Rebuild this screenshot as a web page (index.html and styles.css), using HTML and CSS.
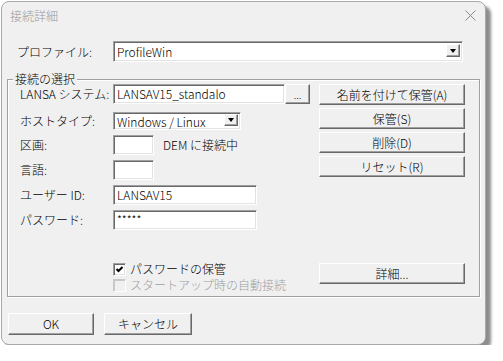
FILE: index.html
```html
<!DOCTYPE html>
<html lang="ja">
<head>
	<meta charset="UTF-8">
	<title>接続詳細</title>
	<link rel="stylesheet" href="styles.css">
</head>
<body>
<div class="window">
	<div class="titlebar">
		<span class="title">接続詳細</span>
		<svg class="close" width="11" height="11" viewBox="0 0 11 11"><path d="M0.5 0.5 L10.5 10.5 M10.5 0.5 L0.5 10.5" stroke="#8a8a8a" stroke-width="1" fill="none"/></svg>
	</div>
	<div class="body">
		<div class="profile">
			<label class="lbl">プロファイル:</label>
			<div class="combo sunken w-profile"><span>ProfileWin</span><span class="arrow"><i></i></span></div>
		</div>
		<fieldset class="group">
			<legend>接続の選択</legend>
			<div class="group-main">
				<div class="form">
					<div class="row first">
						<label class="lbl">LANSA システム:</label>
						<div class="sunken text w-sys">LANSAV15_standalo</div>
						<button class="btn browse">...</button>
					</div>
					<div class="row host">
						<label class="lbl">ホストタイプ:</label>
						<div class="combo sunken w-host"><span>Windows / Linux</span><span class="arrow"><i></i></span></div>
					</div>
					<div class="row">
						<label class="lbl">区画:</label>
						<div class="sunken text w-small"></div>
						<span class="note">DEM に接続中</span>
					</div>
					<div class="row">
						<label class="lbl">言語:</label>
						<div class="sunken text w-small"></div>
					</div>
					<div class="row">
						<label class="lbl">ユーザー ID:</label>
						<div class="sunken text w-user">LANSAV15</div>
					</div>
					<div class="row">
						<label class="lbl">パスワード:</label>
						<div class="sunken text w-user pw">*****</div>
					</div>
				</div>
				<div class="actions">
					<button class="btn">名前を付けて保管(A)</button>
					<button class="btn">保管(S)</button>
					<button class="btn">削除(D)</button>
					<button class="btn">リセット(R)</button>
				</div>
			</div>
			<div class="group-bottom">
				<div class="checks">
					<div class="check">
						<span class="box sunken"><svg width="9" height="9" viewBox="0 0 9 9"><path d="M1.5 4 L3.5 6 L7.5 2" stroke="#000" stroke-width="2" fill="none"/></svg></span>
						<span>パスワードの保管</span>
					</div>
					<div class="check disabled">
						<span class="box sunken"></span>
						<span>スタートアップ時の自動接続</span>
					</div>
				</div>
				<button class="btn detail">詳細...</button>
			</div>
		</fieldset>
		<div class="footer">
			<button class="btn ok">OK</button>
			<button class="btn cancel">キャンセル</button>
		</div>
	</div>
</div>
</body>
</html>
```

FILE: styles.css
```css
*{ margin: 0; padding: 0; box-sizing: border-box; }
body{ background: #fff; padding: 1px 0 0 1px; font-family: "Noto Sans CJK JP", sans-serif; font-size: 12px; font-weight: 300; color: #000; }

.window{ width: 485px; height: 344px; background: #f0f0f0; border: 1px solid #a9a9a9; border-radius: 8px; box-shadow: 5px 5px 3px rgba(0,0,0,0.45); }
.titlebar{ height: 28px; display: flex; align-items: center; justify-content: space-between; padding: 0 9px 0 8px; }
.title{ color: #999; line-height: 14px; }
.close{ display: block; margin-top: -1px; }

.body{ padding: 0 5px 0 5px; }
.lbl{ width: 93px; flex: none; line-height: 14px; }
.profile{ display: flex; align-items: center; margin-top: 11px; padding-left: 10px; height: 21px; }
.profile .lbl{ width: 96px; }

/* 3D borders */
.sunken{ background: #fff; border: 1px solid; border-color: #a0a0a0 #fff #fff #a0a0a0; box-shadow: inset 1px 1px #696969, inset -1px -1px #e3e3e3; }
.btn{ display: flex; align-items: center; justify-content: center; font: inherit; color: #000; background: #f0f0f0; border: 1px solid; border-color: #fff #696969 #696969 #fff; box-shadow: inset -1px -1px #a0a0a0; line-height: 14px; }

.text{ height: 20px; padding: 0 3px; line-height: 17px; white-space: nowrap; overflow: hidden; }
.combo{ display: flex; justify-content: space-between; align-items: flex-start; padding: 2px 2px 2px 3px; line-height: 15px; }
.w-profile{ width: 350px; height: 21px; }
.w-host{ width: 128px; height: 18px; padding-top: 1px; }
.arrow{ width: 14px; height: 13px; display: flex; align-items: center; justify-content: center; background: #f0f0f0; border: 1px solid; border-color: #fff #696969 #696969 #fff; box-shadow: inset -1px -1px #a0a0a0; }
.w-host .arrow{ height: 12px; }
.arrow i{ width: 0; height: 0; border-top: 4px solid #000; border-left: 3.5px solid transparent; border-right: 3.5px solid transparent; }

.group{ margin: 13px 0 0 0; border: 1px solid #a0a0a0; box-shadow: inset 1px 1px #fff, 1px 1px #fff; padding: 0 14px 3px 12px; min-width: 0; }
.group legend{ line-height: 8px; padding: 0 2px; margin-left: -7px; margin-top: -1px; background: #f0f0f0; }

.group-main{ display: flex; align-items: flex-start; }
.row{ display: flex; align-items: center; height: 20px; margin-top: 5px; }
.row.first{ margin-top: 1px; }
.row.host{ height: 18px; margin-top: 8px; }
.w-sys{ width: 172px; }
.browse{ width: 25px; height: 20px; align-items: flex-end; padding-bottom: 3px; font-size: 10px; line-height: 10px; }
.w-small{ width: 41px; }
.note{ margin-left: 9px; line-height: 14px; }
.w-user{ width: 144px; }
.pw{ font-size: 11px; }

.actions{ margin-left: auto; width: 146px; display: flex; flex-direction: column; gap: 3px; padding-top: 1px; }
.actions .btn{ height: 21px; }

.group-bottom{ display: flex; align-items: flex-start; margin-top: 31px; }
.checks{ margin-left: 93px; }
.check{ display: flex; align-items: center; gap: 4px; height: 16px; line-height: 14px; }
.box{ width: 13px; height: 13px; display: flex; align-items: center; justify-content: center; }
.box svg{ display: block; }
.check.disabled{ color: #a0a0a0; }
.check.disabled .box{ background: #f0f0f0; border-color: #c8c8c8 #fff #fff #c8c8c8; box-shadow: inset 1px 1px #c8c8c8; }
.detail{ margin-left: auto; margin-top: 2px; width: 146px; height: 21px; }

.footer{ display: flex; gap: 10px; margin-top: 16px; padding-left: 1px; }
.footer .btn{ height: 22px; }
.ok{ width: 86px; }
.cancel{ width: 88px; }
```
